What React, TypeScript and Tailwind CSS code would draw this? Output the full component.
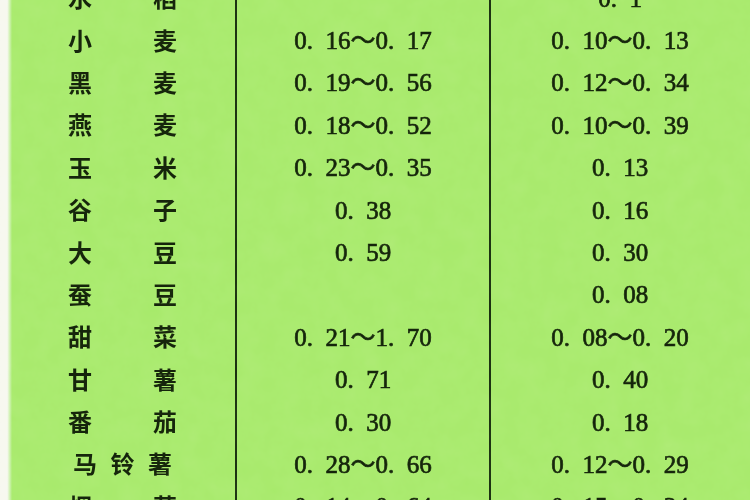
const ROWS: { name: string[]; a: string; b: string }[] = [
  { name: ["水", "稻"], a: "", b: "0. 1" },
  { name: ["小", "麦"], a: "0. 16～0. 17", b: "0. 10～0. 13" },
  { name: ["黑", "麦"], a: "0. 19～0. 56", b: "0. 12～0. 34" },
  { name: ["燕", "麦"], a: "0. 18～0. 52", b: "0. 10～0. 39" },
  { name: ["玉", "米"], a: "0. 23～0. 35", b: "0. 13" },
  { name: ["谷", "子"], a: "0. 38", b: "0. 16" },
  { name: ["大", "豆"], a: "0. 59", b: "0. 30" },
  { name: ["蚕", "豆"], a: "", b: "0. 08" },
  { name: ["甜", "菜"], a: "0. 21～1. 70", b: "0. 08～0. 20" },
  { name: ["甘", "薯"], a: "0. 71", b: "0. 40" },
  { name: ["番", "茄"], a: "0. 30", b: "0. 18" },
  { name: ["马", "铃", "薯"], a: "0. 28～0. 66", b: "0. 12～0. 29" },
  { name: ["烟", "草"], a: "0. 14～0. 64", b: "0. 15～0. 34" },
];

// "0. 16" — the scan has a wide gap after the dot
function Num({ v }: { v: string }) {
  return <span className="whitespace-pre">{v.replace(/\. /g, ".\u2002")}</span>;
}

function Noise() {
  return (
    <svg className="pointer-events-none absolute inset-0 h-full w-full opacity-25 mix-blend-soft-light" aria-hidden>
      <filter id="grain">
        <feTurbulence type="fractalNoise" baseFrequency="0.05" numOctaves="4" seed="7" />
        <feColorMatrix type="saturate" values="0" />
      </filter>
      <rect width="100%" height="100%" filter="url(#grain)" />
    </svg>
  );
}

export default function App() {
  return (
    <div className="relative flex h-[500px] w-[750px] overflow-hidden bg-[#a8ea6c]">
      <div className="w-[12px] shrink-0 bg-gradient-to-r from-[#f7f8ef] from-60% to-[#a8ea6c]" />
      <div className="relative flex-1">
        <div className="mt-[-24px] flex flex-col text-[#13220a]">
          {ROWS.map((r, i) => (
            <div key={i} className="grid h-[42.4px] grid-cols-[224px_254px_1fr] items-center">
              <div className="relative h-full">
                <div
                  className={`absolute top-0 flex h-full items-center justify-between font-['Noto_Sans_CJK_SC',sans-serif] text-[24px] font-bold leading-none ${
                    r.name.length === 3 ? "left-[61px] w-[99px]" : "left-[56px] w-[109px]"
                  }`}
                >
                  {r.name.map((c, j) => (
                    <span key={j}>{c}</span>
                  ))}
                </div>
              </div>
              <div className="flex h-full items-center justify-center pt-[2px] font-['Liberation_Serif','Noto_Sans_CJK_SC',serif] text-[25px] leading-none [-webkit-text-stroke:0.7px_#13220a]">
                <Num v={r.a} />
              </div>
              <div className="flex h-full items-center justify-center pt-[2px] font-['Liberation_Serif','Noto_Sans_CJK_SC',serif] text-[25px] leading-none [-webkit-text-stroke:0.7px_#13220a]">
                <Num v={r.b} />
              </div>
            </div>
          ))}
        </div>
        <div className="absolute inset-y-0 left-[223px] w-[2px] bg-[#1a3010]" />
        <div className="absolute inset-y-0 left-[477px] w-[2px] bg-[#1a3010]" />
      </div>
      <Noise />
    </div>
  );
}
